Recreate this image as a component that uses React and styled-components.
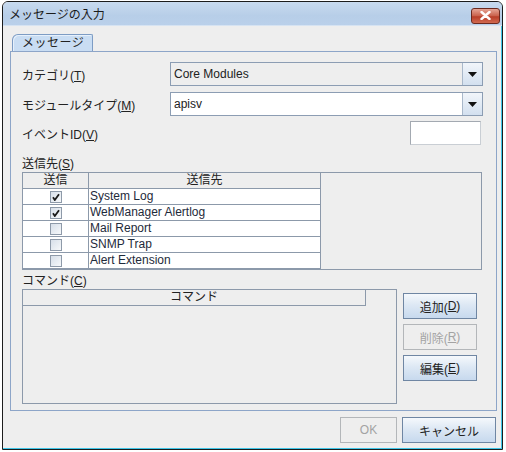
import React from 'react';
import styled, { createGlobalStyle } from 'styled-components';

const GlobalStyle = createGlobalStyle`
    body {
        margin: 0;
        background: #ffffff;
        font-family: "Liberation Sans", "Noto Sans CJK JP", sans-serif;
        font-size: 12px;
        color: #222;
    }
`

const Page = styled.div`
    padding: 1px 0 0 2px;
`

const Window = styled.div`
    box-sizing: border-box;
    width: 501px;
    height: 449px;
    border: 1px solid #1c1c1c;
    border-radius: 6px 6px 0 0;
    box-shadow: inset -1px -1px 0 #3fc6e8;
    overflow: hidden;
    display: flex;
    flex-direction: column;
    background: #eeeeee;
`

const TitleBar = styled.div`
    height: 23px;
    flex: none;
    display: flex;
    align-items: center;
    justify-content: space-between;
    padding: 0 2px 0 6px;
    background: linear-gradient(#c8daef, #b7cee8 60%, #bad0ea);
    border-bottom: 1px solid #d6e3f2;
    font-size: 12px;
    color: #1b1b1b;
`

const CloseButton = styled.div`
    box-sizing: border-box;
    width: 29px;
    height: 16px;
    margin-top: 4px;
    border: 1px solid #6b2a20;
    border-radius: 3px;
    background: linear-gradient(#e6a596, #c9604a 50%, #b83d28 55%, #d26a50);
    display: flex;
    align-items: center;
    justify-content: center;
`

const Client = styled.div`
    flex: 1;
    display: flex;
    flex-direction: column;
    padding: 8px 0 0 7px;
`

const TabStrip = styled.div`
    display: flex;
    padding-left: 2px;
`

const Tab = styled.div`
    box-sizing: border-box;
    width: 81px;
    height: 17px;
    border: 1px solid #7d9cc4;
    border-bottom: none;
    border-radius: 6px 2px 0 0;
    background: #c9ddf3;
    box-shadow: inset 1px 1px 0 #e6f0fb;
    padding-left: 9px;
    line-height: 16px;
    letter-spacing: 0.5px;
`

const Panel = styled.div`
    box-sizing: border-box;
    width: 487px;
    height: 360px;
    border: 1px solid #8da5c8;
    padding: 10px 13px 0 11px;
    display: flex;
    flex-direction: column;
`

const FormRow = styled.div`
    display: flex;
    align-items: center;
    height: 24px;
    margin-top: ${p => p.$gap || 0}px;
`

const Label = styled.div`
    width: 148px;
    flex: none;
`

const Mn = styled.span`
    text-decoration: underline;
`

const Combo = styled.div`
    box-sizing: border-box;
    flex: 1;
    height: 24px;
    display: flex;
    border: 1px solid #8c9db3;
    background: ${p => (p.$editable ? '#ffffff' : '#eeeeee')};
`

const ComboText = styled.div`
    flex: 1;
    padding-left: 3px;
    line-height: 22px;
`

const ArrowButton = styled.div`
    width: 19px;
    border-left: 1px solid #a9b8ca;
    background: linear-gradient(#f1f5fa, #d3e0ef);
    display: flex;
    align-items: center;
    justify-content: center;
`

const Spacer = styled.div`
    flex: 1;
`

const TextField = styled.div`
    box-sizing: border-box;
    width: 71px;
    height: 24px;
    margin-right: 2px;
    background: #ffffff;
    border: 1px solid #a3a9b1;
    border-right-color: #c9ced4;
    border-bottom-color: #c9ced4;
`

const SectionLabel = styled.div`
    line-height: 15px;
    margin-top: ${p => p.$gap}px;
`

const TableBox = styled.div`
    box-sizing: border-box;
    width: ${p => p.$w}px;
    height: ${p => p.$h}px;
    border: 1px solid #8c99aa;
    display: flex;
    flex-direction: column;
    align-items: flex-start;
`

const Grid = styled.div`
    display: grid;
    grid-template-columns: 66px 232px;
    grid-auto-rows: 16px;
`

const HeadCell = styled.div`
    box-sizing: border-box;
    border-right: 1px solid #8c99aa;
    border-bottom: 1px solid #8c99aa;
    text-align: center;
    line-height: 15px;
    background: #eeeeee;
    width: ${p => (p.$w ? `${p.$w}px` : 'auto')};
    height: ${p => (p.$w ? '16px' : 'auto')};
`

const Cell = styled.div`
    box-sizing: border-box;
    background: #ffffff;
    border-right: 1px solid #8c99aa;
    border-bottom: 1px solid #8c99aa;
    display: flex;
    align-items: center;
    justify-content: ${p => (p.$center ? 'center' : 'flex-start')};
    padding-left: ${p => (p.$center ? 0 : 1)}px;
    line-height: 15px;
    color: #1e2a3a;
`

const Check = styled.div`
    box-sizing: border-box;
    width: 12px;
    height: 12px;
    border: 1px solid #8e9aa9;
    background: linear-gradient(135deg, #d7dfe9, #f6f8fa);
    display: flex;
    align-items: center;
    justify-content: center;
`

const CommandArea = styled.div`
    display: flex;
    gap: 6px;
`

const ButtonColumn = styled.div`
    display: flex;
    flex-direction: column;
    gap: 5px;
    padding-top: 4px;
`

const Button = styled.div`
    box-sizing: border-box;
    width: ${p => p.$w || 74}px;
    height: 26px;
    display: flex;
    align-items: center;
    justify-content: center;
    border: 1px solid ${p => (p.$disabled ? '#b3b6b9' : '#6f86a3')};
    background: ${p => (p.$disabled ? '#eeeeee' : 'linear-gradient(#f5f8fc, #dde8f4 45%, #c7d9ee)')};
    color: ${p => (p.$disabled ? '#a3a3a3' : '#222')};
    font-size: 12px;
`

const Footer = styled.div`
    display: flex;
    justify-content: flex-end;
    gap: 5px;
    padding: 6px 6px 0 0;
`

const ArrowIcon = () => (
    <svg width="9" height="5" viewBox="0 0 9 5">
        <path d="M0 0H9L4.5 5Z" fill="#111" />
    </svg>
)

const CheckMark = () => (
    <svg width="8" height="8" viewBox="0 0 8 8">
        <path d="M1 4.2L2.8 7L7 1.2" stroke="#1a1a1a" strokeWidth="1.8" fill="none" />
    </svg>
)

const targets = [
    { name: 'System Log', on: true },
    { name: 'WebManager Alertlog', on: true },
    { name: 'Mail Report', on: false },
    { name: 'SNMP Trap', on: false },
    { name: 'Alert Extension', on: false },
]

export default function App() {
    return (
        <Page>
            <GlobalStyle />
            <Window>
                <TitleBar>
                    <span>メッセージの入力</span>
                    <CloseButton>
                        <svg width="11" height="9" viewBox="0 0 11 9">
                            <path d="M1.5 1L9.5 8M9.5 1L1.5 8" stroke="#ffffff" strokeWidth="2.4" strokeLinecap="round" />
                        </svg>
                    </CloseButton>
                </TitleBar>
                <Client>
                    <TabStrip>
                        <Tab>メッセージ</Tab>
                    </TabStrip>
                    <Panel>
                        <FormRow>
                            <Label>カテゴリ(<Mn>T</Mn>)</Label>
                            <Combo>
                                <ComboText>Core Modules</ComboText>
                                <ArrowButton><ArrowIcon /></ArrowButton>
                            </Combo>
                        </FormRow>
                        <FormRow $gap={6}>
                            <Label>モジュールタイプ(<Mn>M</Mn>)</Label>
                            <Combo $editable>
                                <ComboText>apisv</ComboText>
                                <ArrowButton><ArrowIcon /></ArrowButton>
                            </Combo>
                        </FormRow>
                        <FormRow $gap={5}>
                            <Label>イベントID(<Mn>V</Mn>)</Label>
                            <Spacer />
                            <TextField />
                        </FormRow>
                        <SectionLabel $gap={12}>送信先(<Mn>S</Mn>)</SectionLabel>
                        <TableBox $w={460} $h={98}>
                            <Grid>
                                <HeadCell>送信</HeadCell>
                                <HeadCell>送信先</HeadCell>
                                {targets.map(t => (
                                    <React.Fragment key={t.name}>
                                        <Cell $center>
                                            <Check>{t.on && <CheckMark />}</Check>
                                        </Cell>
                                        <Cell>{t.name}</Cell>
                                    </React.Fragment>
                                ))}
                            </Grid>
                        </TableBox>
                        <SectionLabel $gap={4}>コマンド(<Mn>C</Mn>)</SectionLabel>
                        <CommandArea>
                            <TableBox $w={375} $h={115}>
                                <HeadCell $w={343}>コマンド</HeadCell>
                            </TableBox>
                            <ButtonColumn>
                                <Button>追加(<Mn>D</Mn>)</Button>
                                <Button $disabled>削除(<Mn>R</Mn>)</Button>
                                <Button>編集(<Mn>E</Mn>)</Button>
                            </ButtonColumn>
                        </CommandArea>
                    </Panel>
                    <Footer>
                        <Button $w={57} $disabled>OK</Button>
                        <Button $w={94}>キャンセル</Button>
                    </Footer>
                </Client>
            </Window>
        </Page>
    );
}
